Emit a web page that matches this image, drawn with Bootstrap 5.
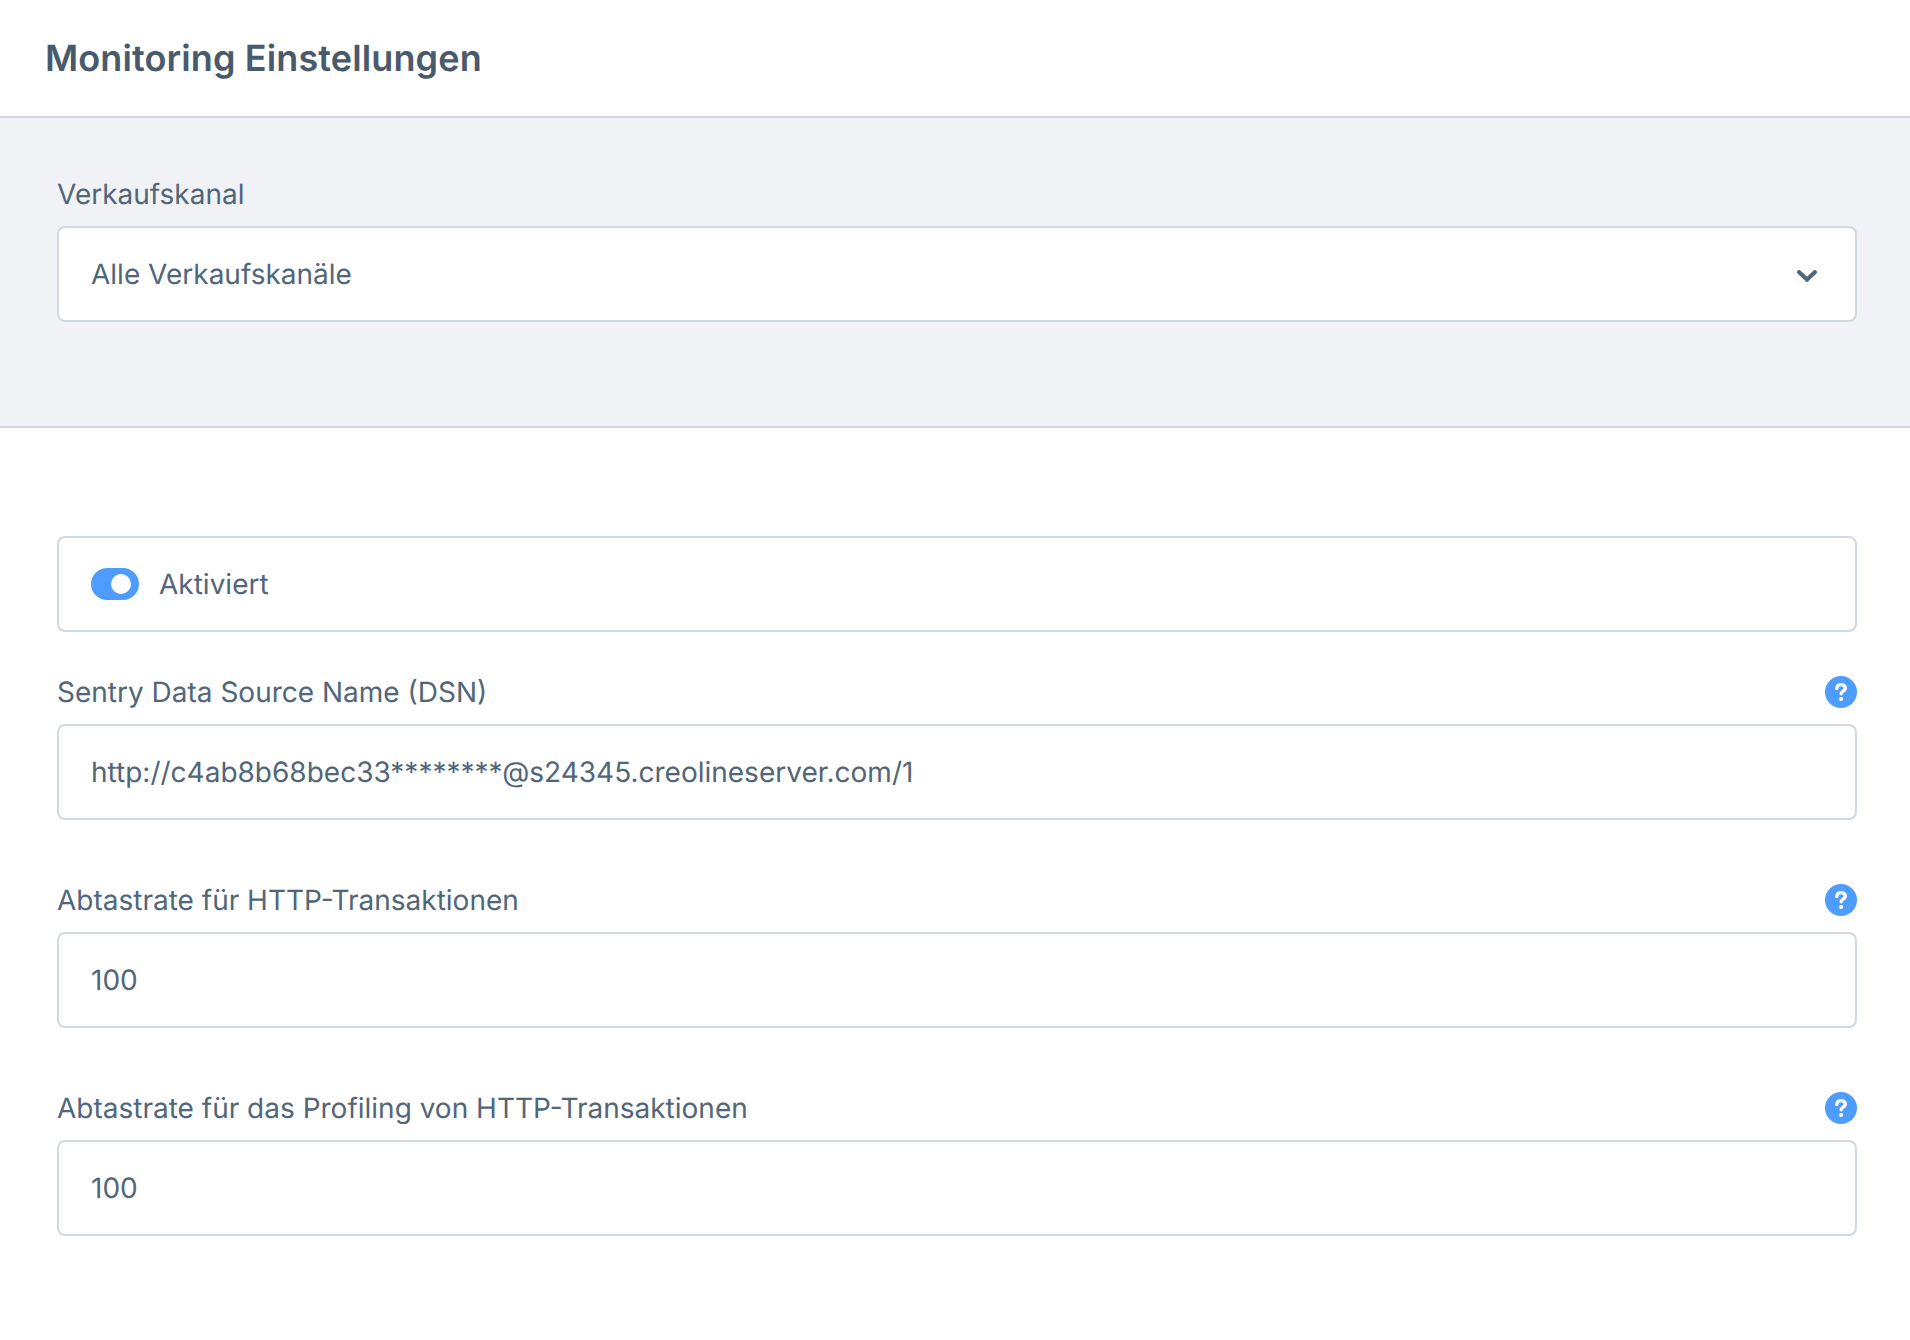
<!DOCTYPE html>
<html lang="de">
<head>
<meta charset="utf-8">
<title>Monitoring Einstellungen</title>
<link href="https://cdn.jsdelivr.net/npm/bootstrap@5.3.0/dist/css/bootstrap.min.css" rel="stylesheet">
<style>
html,body{height:100%}
body{font-family:Inter,"Liberation Sans",sans-serif;background:#fff;color:#52667a;font-size:28px;text-rendering:geometricPrecision}
.pg-head{height:118px;border-bottom:2px solid #d1d9e0;padding:0 45px;display:flex;align-items:center}
.pg-title{margin:0;font-size:36px;font-weight:600;line-height:1;color:#4a5a6d;letter-spacing:.12px}
.pg-band{height:310px;background:#f0f2f5;border-bottom:2px solid #d1d9e0;padding:58px 53px 0 57px}
.pg-body{padding:108px 53px 0 57px}
.fld-label{font-size:28px;line-height:36px;color:#52667a;margin:0 0 14px}
.fld-box{height:96px;border:2px solid #d1d9e0;border-radius:8px;background:#fff;padding:0 32px;display:flex;align-items:center;font-size:28px;color:#52667a;line-height:1}
.fld-wrap{margin-bottom:62px}
.tgl{width:48px;height:32px;border-radius:16px;background:#4f9cff;position:relative;flex:none;margin-right:20px}
.tgl::after{content:"";position:absolute;right:8px;top:6px;width:20px;height:20px;border-radius:50%;background:#fff}
.hlp{width:32px;height:32px;flex:none;display:block}
.chev{width:20px;height:12px;display:block;margin:4px 6px 0 0}
.toggle-box{margin-bottom:42px}
</style>
</head>
<body>
<header class="pg-head"><h1 class="pg-title">Monitoring Einstellungen</h1></header>
<section class="pg-band">
  <div class="fld-label">Verkaufskanal</div>
  <div class="fld-box justify-content-between">
    <span>Alle Verkaufskanäle</span>
    <svg class="chev" viewBox="0 0 20 12" aria-hidden="true"><path d="M2.2 2.2L10 9.6l7.8-7.4" fill="none" stroke="#52667a" stroke-width="4.2" stroke-linecap="round" stroke-linejoin="miter"/></svg>
  </div>
</section>
<main class="pg-body">
  <div class="fld-box toggle-box"><span class="tgl"></span><span>Aktiviert</span></div>
  <div class="fld-wrap">
    <div class="d-flex justify-content-between align-items-center fld-label"><span>Sentry Data Source Name (DSN)</span>
      <svg class="hlp" viewBox="0 0 32 32" aria-hidden="true"><circle cx="16" cy="16" r="16" fill="#4f9cff"/><path d="M11.8 12.6c0-2.6 2-4 4.3-4 2.4 0 4.2 1.4 4.2 3.6 0 3-4.2 2.9-4.2 5.6" fill="none" stroke="#fff" stroke-width="3.4" stroke-linecap="round"/><circle cx="16.1" cy="23" r="2.1" fill="#fff"/></svg></div>
    <div class="fld-box">http://c4ab8b68bec33********@s24345.creolineserver.com/1</div>
  </div>
  <div class="fld-wrap">
    <div class="d-flex justify-content-between align-items-center fld-label"><span>Abtastrate für HTTP-Transaktionen</span>
      <svg class="hlp" viewBox="0 0 32 32" aria-hidden="true"><circle cx="16" cy="16" r="16" fill="#4f9cff"/><path d="M11.8 12.6c0-2.6 2-4 4.3-4 2.4 0 4.2 1.4 4.2 3.6 0 3-4.2 2.9-4.2 5.6" fill="none" stroke="#fff" stroke-width="3.4" stroke-linecap="round"/><circle cx="16.1" cy="23" r="2.1" fill="#fff"/></svg></div>
    <div class="fld-box">100</div>
  </div>
  <div class="fld-wrap">
    <div class="d-flex justify-content-between align-items-center fld-label"><span>Abtastrate für das Profiling von HTTP-Transaktionen</span>
      <svg class="hlp" viewBox="0 0 32 32" aria-hidden="true"><circle cx="16" cy="16" r="16" fill="#4f9cff"/><path d="M11.8 12.6c0-2.6 2-4 4.3-4 2.4 0 4.2 1.4 4.2 3.6 0 3-4.2 2.9-4.2 5.6" fill="none" stroke="#fff" stroke-width="3.4" stroke-linecap="round"/><circle cx="16.1" cy="23" r="2.1" fill="#fff"/></svg></div>
    <div class="fld-box">100</div>
  </div>
</main>
<script src="https://cdn.jsdelivr.net/npm/bootstrap@5.3.0/dist/js/bootstrap.bundle.min.js"></script>
</body>
</html>
